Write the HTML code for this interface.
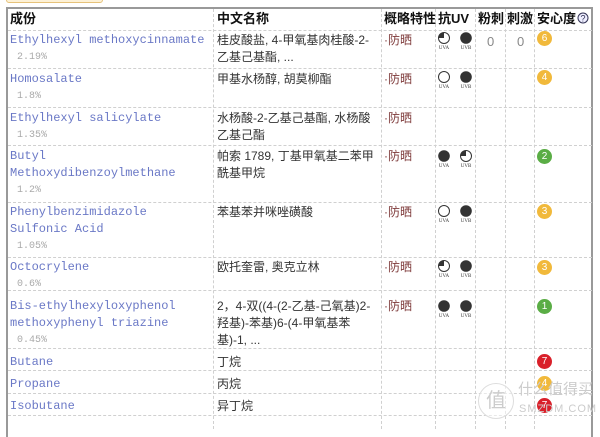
<!DOCTYPE html>
<html><head><meta charset="utf-8"><style>
*{margin:0;padding:0;box-sizing:border-box}
body{width:600px;height:422px;background:#fff;position:relative;overflow:hidden;font-family:"Liberation Sans","Noto Sans CJK SC",sans-serif;font-size:12px;color:#333}
.tab{position:absolute;left:6px;top:-4px;width:97px;height:7px;border:1px solid #e6c27a;background:#fdf1d6;border-radius:3px}
.frame{position:absolute;left:6px;top:7px;width:587px;height:430px;border-left:2px solid #999;border-top:2px solid #999;border-right:2px solid #999}
.vl{position:absolute;top:9px;height:420px;border-left:1px dashed #d0d0d0}
.hl{position:absolute;left:8px;width:584px;border-top:1px dashed #d0d0d0}
.t{position:absolute;white-space:nowrap;line-height:17px}
.h{font-weight:bold;color:#111;font-size:13px;line-height:19px}
.en{font-family:"Liberation Mono",monospace;font-size:12px;color:#6a78c6}
.pc{font-family:"Liberation Mono",monospace;font-size:10px;color:#aaa}
.cn{font-size:12px;color:#333}
.fs{color:#7e3a3a;font-size:12px}
.b{position:absolute;width:15px;height:15px;border-radius:50%;color:#fff;font-size:10px;text-align:center;line-height:15px}
.num{position:absolute;color:#888;font-size:13px}
</style></head><body>
<div class="tab"></div>
<div class="frame"></div>
<div class="vl" style="left:213px"></div>
<div class="vl" style="left:381px"></div>
<div class="vl" style="left:435px"></div>
<div class="vl" style="left:475px"></div>
<div class="vl" style="left:505px"></div>
<div class="vl" style="left:534px"></div>
<div class="hl" style="top:30px"></div>
<div class="hl" style="top:68px"></div>
<div class="hl" style="top:107px"></div>
<div class="hl" style="top:145px"></div>
<div class="hl" style="top:202px"></div>
<div class="hl" style="top:257px"></div>
<div class="hl" style="top:290px"></div>
<div class="hl" style="top:348px"></div>
<div class="hl" style="top:370px"></div>
<div class="hl" style="top:393px"></div>
<div class="hl" style="top:415px"></div>

<div class="t h" style="left:10px;top:9px">成份</div>
<div class="t h" style="left:217px;top:9px">中文名称</div>
<div class="t h" style="left:384px;top:9px">概略特性</div>
<div class="t h" style="left:438px;top:9px">抗UV</div>
<div class="t h" style="left:478px;top:9px">粉刺</div>
<div class="t h" style="left:507px;top:9px">刺激</div>
<div class="t h" style="left:537px;top:9px">安心度</div>
<svg style="position:absolute;left:577px;top:12px" width="12" height="12"><circle cx="6" cy="6" r="5" fill="#eef" stroke="#335" stroke-width="1"/><text x="6" y="9.5" font-size="9" text-anchor="middle" fill="#335" font-family="Liberation Sans">?</text></svg>

<div class="t en" style="left:10px;top:32px">Ethylhexyl methoxycinnamate</div>
<div class="t pc" style="left:17px;top:49px">2.19%</div>
<div class="t cn" style="left:217px;top:32px">桂皮酸盐, 4-甲氧基肉桂酸-2-<br>乙基己基酯, ...</div>
<div class="t fs" style="left:384px;top:32px">·防晒</div>
<div class="num" style="left:487px;top:34px">0</div>
<div class="num" style="left:517px;top:34px">0</div>

<div class="t en" style="left:10px;top:71px">Homosalate</div>
<div class="t pc" style="left:17px;top:88px">1.8%</div>
<div class="t cn" style="left:217px;top:71px">甲基水杨醇, 胡莫柳酯</div>
<div class="t fs" style="left:384px;top:71px">·防晒</div>

<div class="t en" style="left:10px;top:110px">Ethylhexyl salicylate</div>
<div class="t pc" style="left:17px;top:127px">1.35%</div>
<div class="t cn" style="left:217px;top:110px">水杨酸-2-乙基己基酯, 水杨酸<br>乙基己酯</div>
<div class="t fs" style="left:384px;top:110px">·防晒</div>

<div class="t en" style="left:10px;top:148px">Butyl<br>Methoxydibenzoylmethane</div>
<div class="t pc" style="left:17px;top:182px">1.2%</div>
<div class="t cn" style="left:217px;top:148px">帕索 1789, 丁基甲氧基二苯甲<br>酰基甲烷</div>
<div class="t fs" style="left:384px;top:148px">·防晒</div>

<div class="t en" style="left:10px;top:204px">Phenylbenzimidazole<br>Sulfonic Acid</div>
<div class="t pc" style="left:17px;top:238px">1.05%</div>
<div class="t cn" style="left:217px;top:204px">苯基苯并咪唑磺酸</div>
<div class="t fs" style="left:384px;top:204px">·防晒</div>

<div class="t en" style="left:10px;top:259px">Octocrylene</div>
<div class="t pc" style="left:17px;top:276px">0.6%</div>
<div class="t cn" style="left:217px;top:259px">欧托奎雷, 奥克立林</div>
<div class="t fs" style="left:384px;top:259px">·防晒</div>

<div class="t en" style="left:10px;top:298px">Bis-ethylhexyloxyphenol<br>methoxyphenyl triazine</div>
<div class="t pc" style="left:17px;top:332px">0.45%</div>
<div class="t cn" style="left:217px;top:298px">2，4-双((4-(2-乙基-己氧基)2-<br>羟基)-苯基)6-(4-甲氧基苯<br>基)-1, ...</div>
<div class="t fs" style="left:384px;top:298px">·防晒</div>

<div class="t en" style="left:10px;top:354px">Butane</div>
<div class="t cn" style="left:217px;top:354px">丁烷</div>
<div class="t en" style="left:10px;top:376px">Propane</div>
<div class="t cn" style="left:217px;top:376px">丙烷</div>
<div class="t en" style="left:10px;top:398px">Isobutane</div>
<div class="t cn" style="left:217px;top:398px">异丁烷</div>

<svg style="position:absolute;left:436px;top:30px" width="40" height="330">
<defs>
<g id="f"><circle r="5.8" fill="#333"/></g>
<g id="e"><circle r="5.5" fill="#fff" stroke="#333" stroke-width="1"/></g>
<g id="q"><circle r="5.5" fill="#fff" stroke="#333" stroke-width="1"/><path d="M0 0 L-5.5 0 A5.5 5.5 0 0 1 0 -5.5 Z" fill="#333"/></g>
</defs>
<g font-family="Liberation Serif" font-size="5" fill="#333" text-anchor="middle">
<use href="#q" x="8" y="8"/><use href="#f" x="30" y="8"/><text x="8" y="19">UVA</text><text x="30" y="19">UVB</text>
<use href="#e" x="8" y="47"/><use href="#f" x="30" y="47"/><text x="8" y="58">UVA</text><text x="30" y="58">UVB</text>
<use href="#f" x="8" y="126"/><use href="#q" x="30" y="126"/><text x="8" y="137">UVA</text><text x="30" y="137">UVB</text>
<use href="#e" x="8" y="181"/><use href="#f" x="30" y="181"/><text x="8" y="192">UVA</text><text x="30" y="192">UVB</text>
<use href="#q" x="8" y="236"/><use href="#f" x="30" y="236"/><text x="8" y="247">UVA</text><text x="30" y="247">UVB</text>
<use href="#f" x="8" y="276"/><use href="#f" x="30" y="276"/><text x="8" y="287">UVA</text><text x="30" y="287">UVB</text>
</g></svg>

<div class="b" style="left:537px;top:31px;background:#f1b93b">6</div>
<div class="b" style="left:537px;top:70px;background:#f1b93b">4</div>
<div class="b" style="left:537px;top:149px;background:#5aad45">2</div>
<div class="b" style="left:537px;top:204px;background:#f1b93b">3</div>
<div class="b" style="left:537px;top:260px;background:#f1b93b">3</div>
<div class="b" style="left:537px;top:299px;background:#5aad45">1</div>
<div class="b" style="left:537px;top:354px;background:#d9202a">7</div>
<div class="b" style="left:537px;top:376px;background:#f1b93b">4</div>
<div class="b" style="left:537px;top:398px;background:#d9202a">7</div>

<div style="position:absolute;left:478px;top:383px;width:36px;height:36px;border:1px solid #ddd;border-radius:50%;background:rgba(255,255,255,.5);color:#ccc;font-size:20px;text-align:center;line-height:34px">值</div>
<div class="t" style="left:518px;top:381px;color:#ccc;font-size:15px">什么值得买</div>
<div class="t" style="left:519px;top:401px;color:#ccc;font-size:11px;letter-spacing:1px">SMZDM.COM</div>
</body></html>
